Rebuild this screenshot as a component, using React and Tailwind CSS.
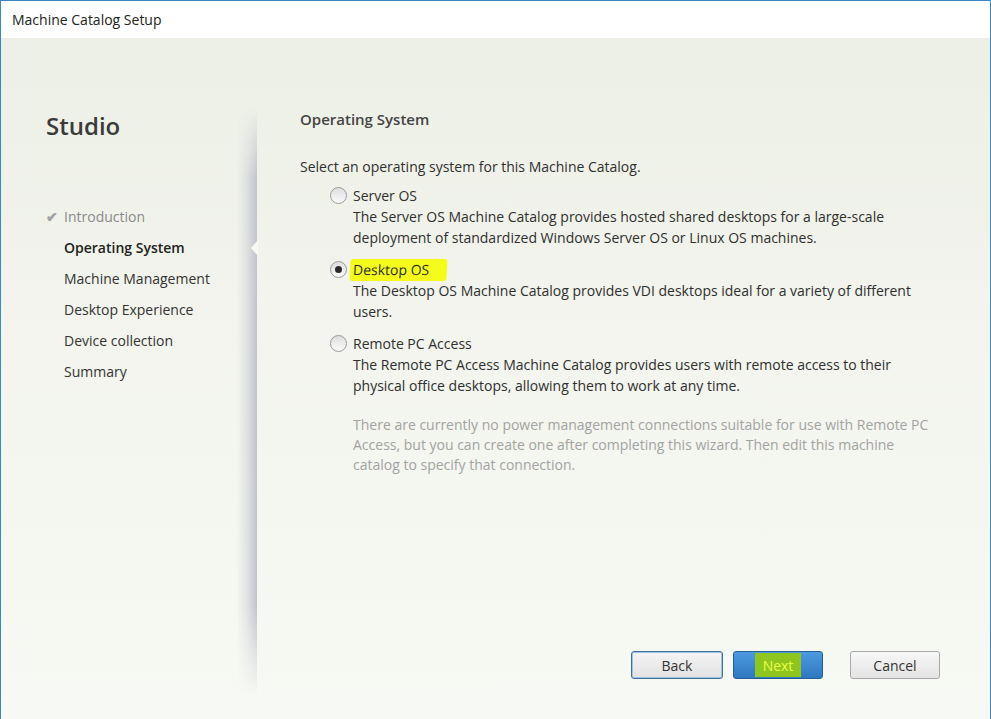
import React from 'react';

const font = { fontFamily: '"Open Sans", "Noto Sans", sans-serif' };

const steps = [
  { label: 'Introduction', done: true },
  { label: 'Operating System', active: true },
  { label: 'Machine Management' },
  { label: 'Desktop Experience' },
  { label: 'Device collection' },
  { label: 'Summary' },
];

const Radio = ({ checked }) => (
  <span className="relative mr-[6px] flex h-[17px] w-[17px] shrink-0 items-center justify-center rounded-full border border-[#9a9a9a] bg-[linear-gradient(to_bottom,#dedede,#fbfbfb)]">
    {checked && <span className="h-[7px] w-[7px] rounded-full bg-[#2a2a2a]" />}
  </span>
);

const Option = ({ label, checked, highlight, children }) => (
  <div className="flex flex-col">
    <div className="flex h-[21px] items-center pl-[30px]">
      <Radio checked={checked} />
      {highlight ? (
        <span className="-ml-[3px] -skew-x-3 rounded-[3px] bg-[#f5fb1a] pl-[3px] pr-[18px] leading-[22px]">{label}</span>
      ) : (
        <span>{label}</span>
      )}
    </div>
    <div className="pl-[53px] leading-[21px]">{children}</div>
  </div>
);

const App = () => {
  return (
    <div style={font} className="flex h-[719px] w-[991px] flex-col overflow-hidden border-x border-t border-[#3b87c4] bg-white text-[14px] text-[#2f2f2f]">
      <div className="flex h-[37px] shrink-0 items-center pl-[11px] text-[14px] text-[#222]">Machine Catalog Setup</div>

      <div className="flex flex-1 bg-[linear-gradient(to_bottom,#edf0e6,#f2f4ed_40%,#f7f9f4)] pl-[2px]">
        {/* sidebar */}
        <div className="flex w-[254px] shrink-0">
          <div className="flex flex-1 flex-col pl-[43px] pt-[72px]">
            <div className="text-[24px] font-semibold leading-[32px] text-[#3b3b3b]">Studio</div>
            <div className="mt-[59px] flex flex-col">
              {steps.map((s) => (
                <div key={s.label} className={`relative flex h-[31px] items-center pl-[18px] ${s.active ? 'font-semibold text-[#222]' : s.done ? 'text-[#8a8a8a]' : 'text-[#333]'}`}>
                  {s.done && <span className="absolute left-0 text-[14px] font-bold text-[#a0a0a0]">✔</span>}
                  {s.label}
                </div>
              ))}
            </div>
          </div>
          <div className="mb-[25px] mt-[70px] w-[20px] bg-[linear-gradient(to_right,rgba(200,202,210,0),rgba(200,202,210,0.45)_50%,rgba(192,195,204,1))] [mask-image:linear-gradient(to_bottom,transparent,black_12%,black_85%,transparent)]" />
        </div>

        {/* content */}
        <div className="relative flex flex-1 flex-col pl-[43px] pr-[50px] pt-[71px]">
          <span className="absolute left-[-6px] top-[202px] h-0 w-0 border-y-[8px] border-r-[7px] border-y-transparent border-r-[#f7f8f4]" />
          <div className="text-[15px] font-semibold leading-[20px] text-[#444]">Operating System</div>
          <div className="mt-[27px] leading-[21px]">Select an operating system for this Machine Catalog.</div>
          <div className="mt-[8px] flex flex-col gap-[11px]">
            <Option label="Server OS">
              The Server OS Machine Catalog provides hosted shared desktops for a large-scale
              <br />
              deployment of standardized Windows Server OS or Linux OS machines.
            </Option>
            <Option label="Desktop OS" checked highlight>
              The Desktop OS Machine Catalog provides VDI desktops ideal for a variety of different
              <br />
              users.
            </Option>
            <Option label="Remote PC Access">
              The Remote PC Access Machine Catalog provides users with remote access to their
              <br />
              physical office desktops, allowing them to work at any time.
            </Option>
          </div>
          <div className="mt-[19px] pl-[53px] leading-[20px] text-[#a3a3a3]">
            There are currently no power management connections suitable for use with Remote PC
            <br />
            Access, but you can create one after completing this wizard. Then edit this machine
            <br />
            catalog to specify that connection.
          </div>

          <div className="mt-auto mb-[40px] flex items-center">
            <button className="ml-[331px] h-[28px] w-[92px] rounded-[3px] border border-[#3d6f9e] bg-[linear-gradient(to_bottom,#f4f4f4,#e2e2e2)] text-[14px] text-[#333] shadow-[inset_0_0_0_1px_#9fc3e3]">Back</button>
            <button className="ml-[10px] flex h-[28px] w-[90px] items-center justify-center rounded-[3px] border border-[#245e98] bg-[linear-gradient(to_bottom,#4d9ae0,#2f78c0)] text-[14px]">
              <span className="flex h-[24px] w-[46px] items-center justify-center bg-[#8ec51e] text-[#e9ff45]">Next</span>
            </button>
            <button className="ml-[27px] h-[28px] w-[90px] rounded-[3px] border border-[#a8a8a8] bg-[linear-gradient(to_bottom,#f7f7f7,#e4e4e4)] text-[14px] text-[#333]">Cancel</button>
          </div>
        </div>
      </div>
    </div>
  );
};

export default App;
